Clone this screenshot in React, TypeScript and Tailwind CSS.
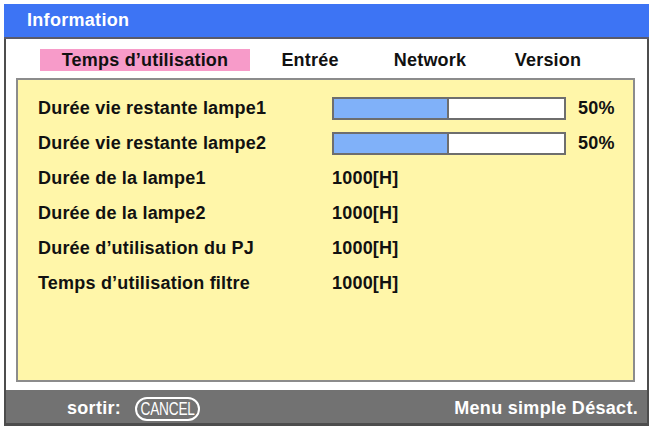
import React from "react";

const font = { fontFamily: '"Liberation Sans", Arial, sans-serif' };

function Bar({ pct }: { pct: number }) {
  return (
    <div className="flex items-center">
      <div className="w-[234px] h-[23px] border-2 border-[#6e6e6e] bg-white flex">
        <div className="h-full bg-[#80b1f9] border-r-2 border-[#6e6e6e]" style={{ width: `${pct}%` }} />
      </div>
      <span className="ml-[12px]">{pct}%</span>
    </div>
  );
}

const rows: { label: string; bar?: number; value?: string }[] = [
  { label: "Durée vie restante lampe1", bar: 50 },
  { label: "Durée vie restante lampe2", bar: 50 },
  { label: "Durée de la lampe1", value: "1000[H]" },
  { label: "Durée de la lampe2", value: "1000[H]" },
  { label: "Durée d’utilisation du PJ", value: "1000[H]" },
  { label: "Temps d’utilisation filtre", value: "1000[H]" },
];

export default function App() {
  return (
    <div className="w-[651px] h-[434px] bg-white pt-[4px] pl-[4px]" style={font}>
      <div className="w-[645px] h-[422px] flex flex-col border-x-2 border-b-[3px] border-[#4d4d4d] bg-white">
        <div className="h-[35px] -mx-[2px] bg-[#3d74f4] border-b-2 border-[#5a5a6a] flex items-center pl-[23px] text-white font-bold text-[18px] tracking-[0.3px]">
          Information
        </div>
        <div className="flex-1 flex flex-col">
          <div className="mt-[10px] flex items-center h-[22px] text-[18px] font-bold text-[#111] tracking-[0.2px]">
            <div className="ml-[34px] w-[210px] h-[22px] bg-[#f79bc9] flex items-center justify-center">
              Temps d’utilisation
            </div>
            <div className="w-[120px] text-center">Entrée</div>
            <div className="w-[120px] text-center">Network</div>
            <div className="w-[116px] text-center">Version</div>
          </div>
          <div className="mt-[7px] ml-[10px] w-[619px] h-[304px] border-2 border-[#8c8c8c] bg-[#fff6a9] pt-[11px] pl-[20px] text-[18px] font-bold text-[#111] tracking-[0.2px]">
            {rows.map((r) => (
              <div key={r.label} className="h-[35px] flex items-center">
                <div className="w-[294px]">{r.label}</div>
                {r.bar !== undefined ? <Bar pct={r.bar} /> : <div>{r.value}</div>}
              </div>
            ))}
          </div>
        </div>
        <div className="h-[33px] bg-[#727272] flex items-center pt-[4px] text-white font-bold text-[18px] tracking-[0.3px]">
          <span className="ml-[61px]">sortir:</span>
          <span className="ml-[14px] w-[65px] h-[24px] rounded-full border-2 border-white flex items-center justify-center overflow-hidden">
            <span className="font-normal text-[19px] leading-none tracking-[-0.3px] scale-x-[0.72] whitespace-nowrap">
              CANCEL
            </span>
          </span>
          <span className="ml-auto mr-[9px]">Menu simple Désact.</span>
        </div>
      </div>
    </div>
  );
}
